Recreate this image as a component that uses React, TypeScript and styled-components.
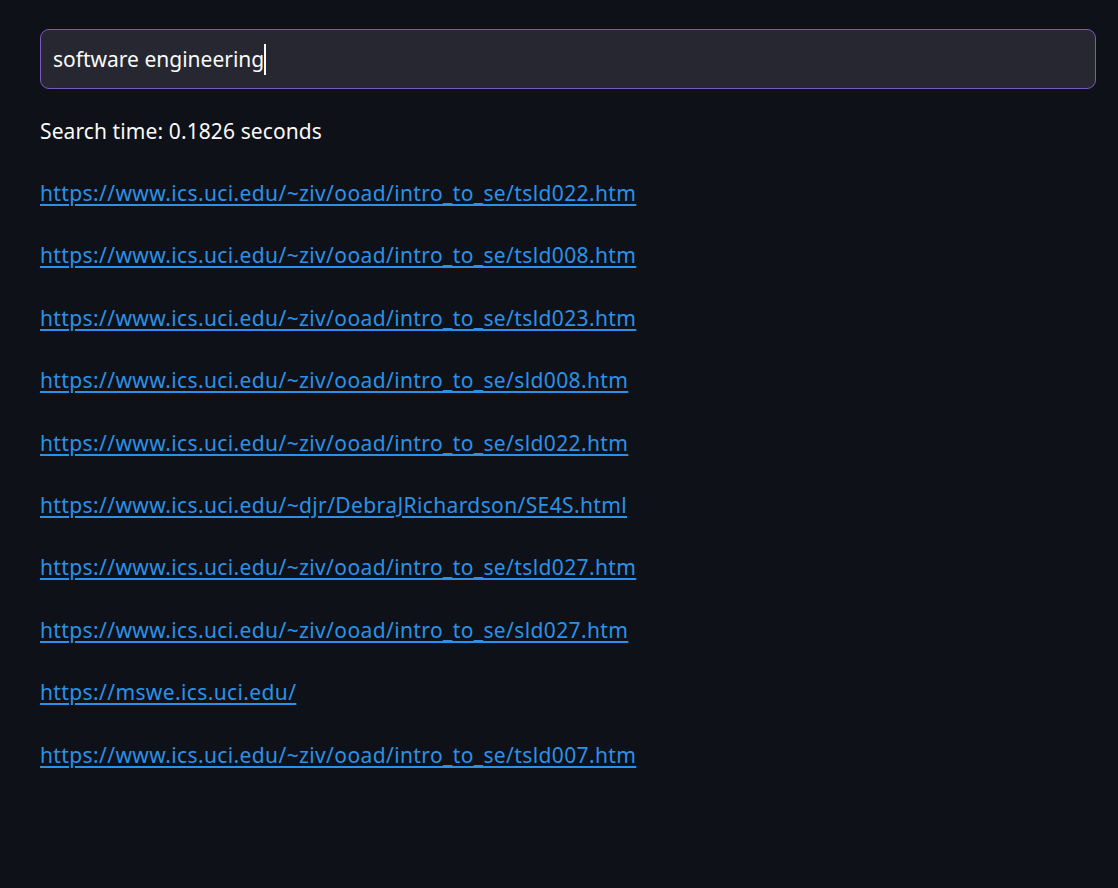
import React from "react";
import styled, { createGlobalStyle } from "styled-components";

const Global = createGlobalStyle`
  html, body { margin: 0; padding: 0; background: #0e1117; }
  body { font-family: "Noto Sans", "Open Sans", sans-serif; color: #fafafa; }
`;

const Page = styled.main`
  min-height: 888px;
  box-sizing: border-box;
  padding: 29px 22px 0 40px;
  display: flex;
  flex-direction: column;
`;

const SearchBox = styled.div`
  height: 60px;
  box-sizing: border-box;
  border: 1px solid #7e57c2;
  border-radius: 9px;
  background: #262730;
  display: flex;
  align-items: center;
  padding: 0 12px;
  font-size: 21px;
  color: #fafafa;
`;

const Caret = styled.span`
  display: inline-block;
  width: 2px;
  height: 31px;
  background: #fafafa;
`;

const Status = styled.p`
  margin: 28px 0 0 0;
  font-size: 21px;
  line-height: 28px;
  letter-spacing: 0.1px;
`;

const Results = styled.ul`
  list-style: none;
  margin: 34px 0 0 0;
  padding: 0;
  display: flex;
  flex-direction: column;
  gap: 34.4px;
`;

const ResultItem = styled.li`
  font-size: 21px;
  line-height: 28px;
  letter-spacing: 0.38px;
`;

const Link = styled.a`
  color: #2b91e8;
  text-decoration: underline;
  text-underline-offset: 3px;
`;

const urls = [
  "https://www.ics.uci.edu/~ziv/ooad/intro_to_se/tsld022.htm",
  "https://www.ics.uci.edu/~ziv/ooad/intro_to_se/tsld008.htm",
  "https://www.ics.uci.edu/~ziv/ooad/intro_to_se/tsld023.htm",
  "https://www.ics.uci.edu/~ziv/ooad/intro_to_se/sld008.htm",
  "https://www.ics.uci.edu/~ziv/ooad/intro_to_se/sld022.htm",
  "https://www.ics.uci.edu/~djr/DebraJRichardson/SE4S.html",
  "https://www.ics.uci.edu/~ziv/ooad/intro_to_se/tsld027.htm",
  "https://www.ics.uci.edu/~ziv/ooad/intro_to_se/sld027.htm",
  "https://mswe.ics.uci.edu/",
  "https://www.ics.uci.edu/~ziv/ooad/intro_to_se/tsld007.htm",
];

export default function App() {
  return (
    <>
      <Global />
      <Page>
        <SearchBox>
          <span>software engineering</span>
          <Caret />
        </SearchBox>
        <Status>Search time: 0.1826 seconds</Status>
        <Results>
          {urls.map((u, i) => (
            <ResultItem key={i}>
              <Link href={u}>{u}</Link>
            </ResultItem>
          ))}
        </Results>
      </Page>
    </>
  );
}
